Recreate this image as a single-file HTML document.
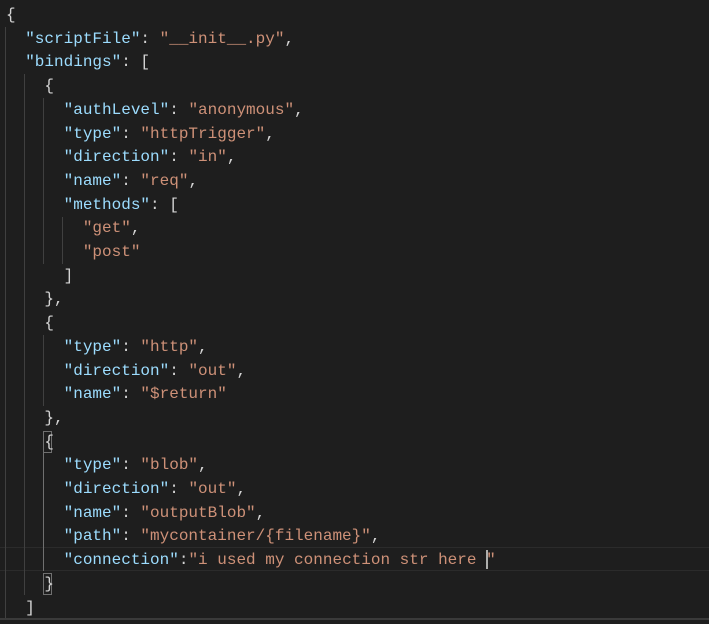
<!DOCTYPE html><html><head><style>
body{margin:0;background:#1e1e1e;width:709px;height:624px;overflow:hidden;position:relative}
pre{position:absolute;left:6px;top:4px;margin:0;font:16px/23.7px "Liberation Mono",monospace;color:#d4d4d4}
.k{color:#9cdcfe}.s{color:#ce9178}
.g{position:absolute;width:1px;background:#404040}
</style></head><body>
<div style="position:absolute;left:0;top:547px;width:709px;height:22px;border-top:1px solid #2b2b2b;border-bottom:1px solid #2b2b2b"></div>
<div class="g" style="left:5px;top:27px;height:591px"></div>
<div class="g" style="left:24px;top:74px;height:521px"></div>
<div class="g" style="left:43px;top:98px;height:166px"></div>
<div class="g" style="left:62px;top:217px;height:47px"></div>
<div class="g" style="left:43px;top:335px;height:71px"></div>
<div class="g" style="left:43px;top:453px;height:118px;background:#707070"></div>
<div style="position:absolute;left:43px;top:573px;width:9px;height:22px;border:1px solid #707070;box-sizing:border-box"></div>
<div style="position:absolute;left:43px;top:431px;width:9px;height:22px;border:1px solid #707070;box-sizing:border-box"></div>
<div style="position:absolute;left:486px;top:550px;width:2px;height:19px;background:#aeafad"></div>
<div style="position:absolute;left:0;top:618px;width:709px;height:2px;background:#3a3a3a"></div>
<pre>{
  <span class="k">"scriptFile"</span>: <span class="s">"__init__.py"</span>,
  <span class="k">"bindings"</span>: [
    {
      <span class="k">"authLevel"</span>: <span class="s">"anonymous"</span>,
      <span class="k">"type"</span>: <span class="s">"httpTrigger"</span>,
      <span class="k">"direction"</span>: <span class="s">"in"</span>,
      <span class="k">"name"</span>: <span class="s">"req"</span>,
      <span class="k">"methods"</span>: [
        <span class="s">"get"</span>,
        <span class="s">"post"</span>
      ]
    },
    {
      <span class="k">"type"</span>: <span class="s">"http"</span>,
      <span class="k">"direction"</span>: <span class="s">"out"</span>,
      <span class="k">"name"</span>: <span class="s">"$return"</span>
    },
    {
      <span class="k">"type"</span>: <span class="s">"blob"</span>,
      <span class="k">"direction"</span>: <span class="s">"out"</span>,
      <span class="k">"name"</span>: <span class="s">"outputBlob"</span>,
      <span class="k">"path"</span>: <span class="s">"mycontainer/{filename}"</span>,
      <span class="k">"connection"</span>:<span class="s">"i used my connection str here "</span>
    }
  ]</pre>
</body></html>
